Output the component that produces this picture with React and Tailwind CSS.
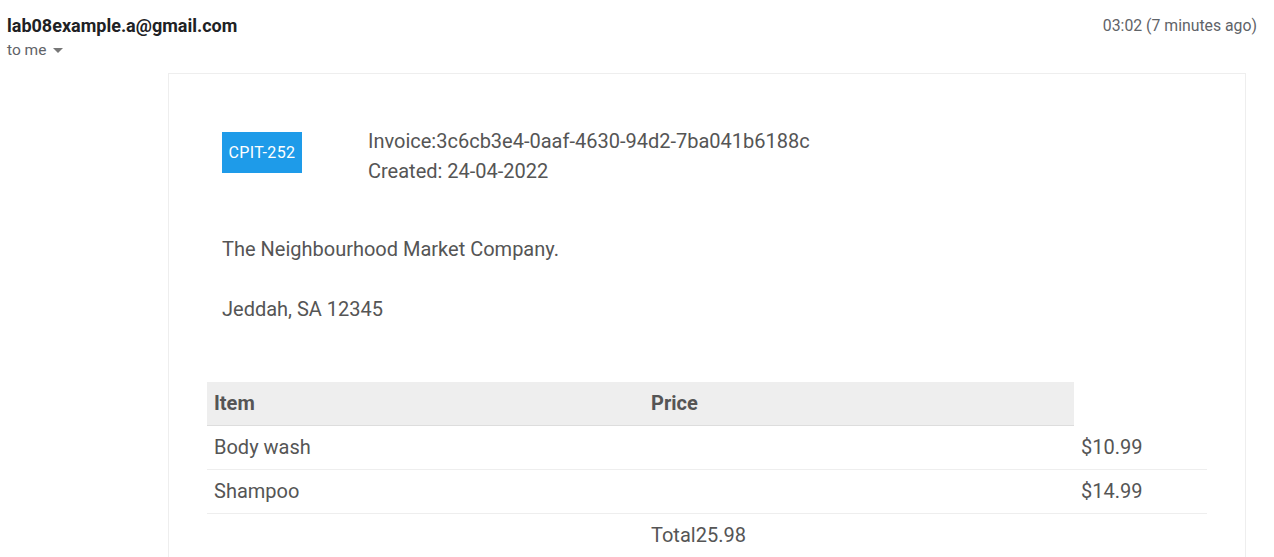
export default function App() {
	return (
		<div className="min-h-[557px] bg-white font-['Roboto',sans-serif] overflow-hidden">
			{/* header */}
			<div className="flex items-start justify-between pl-[7px] pr-[17px] pt-[15px]">
				<div>
					<div className="text-[18px] leading-[22px] font-bold text-[#202124]">lab08example.a@gmail.com</div>
					<div className="flex items-center gap-[7px] text-[15.5px] leading-[20px] text-[#5f6368] mt-[3px]">
						to me
						<span className="inline-block w-0 h-0 border-l-[5px] border-r-[5px] border-t-[5px] border-l-transparent border-r-transparent border-t-[#777]" />
					</div>
				</div>
				<div className="text-[15.8px] leading-[20px] text-[#5f6368] pt-[1px]">03:02 (7 minutes ago)</div>
			</div>

			{/* invoice card */}
			<div className="ml-[168px] mt-[13px] w-[1078px] h-[500px] border border-[#eee] pt-[58px] pl-[38px] text-[#555] text-[20px]">
				<div className="flex items-start pl-[15px]">
					<div className="w-[80px] h-[41px] bg-[#1e9be9] text-white text-[16px] tracking-[0.4px] flex items-center justify-center">CPIT-252</div>
					<div className="ml-[66px] -mt-[6px] leading-[30px]">
						<div>Invoice:3c6cb3e4-0aaf-4630-94d2-7ba041b6188c</div>
						<div>Created: 24-04-2022</div>
					</div>
				</div>

				<div className="pl-[15px] mt-[48px] leading-[30px]">
					<div>The Neighbourhood Market Company.</div>
					<div className="mt-[30px]">Jeddah, SA 12345</div>
				</div>

				<table className="mt-[58px] w-[1000px] table-fixed border-collapse">
					<colgroup>
						<col className="w-[437px]" />
						<col className="w-[430px]" />
						<col className="w-[133px]" />
					</colgroup>
					<tbody>
						<tr>
							<td className="bg-[#eee] border-b border-[#ddd] font-bold h-[43px] px-[7px] align-middle">Item</td>
							<td className="bg-[#eee] border-b border-[#ddd] font-bold h-[43px] px-[7px] align-middle">Price</td>
							<td />
						</tr>
						<tr className="border-b border-[#eee]">
							<td className="h-[44px] px-[7px]">Body wash</td>
							<td className="px-[7px]" />
							<td className="px-[7px]">$10.99</td>
						</tr>
						<tr className="border-b border-[#eee]">
							<td className="h-[44px] px-[7px]">Shampoo</td>
							<td className="px-[7px]" />
							<td className="px-[7px]">$14.99</td>
						</tr>
						<tr>
							<td className="h-[44px] px-[7px]" />
							<td className="px-[7px]">Total25.98</td>
							<td />
						</tr>
					</tbody>
				</table>
			</div>
		</div>
	);
}
